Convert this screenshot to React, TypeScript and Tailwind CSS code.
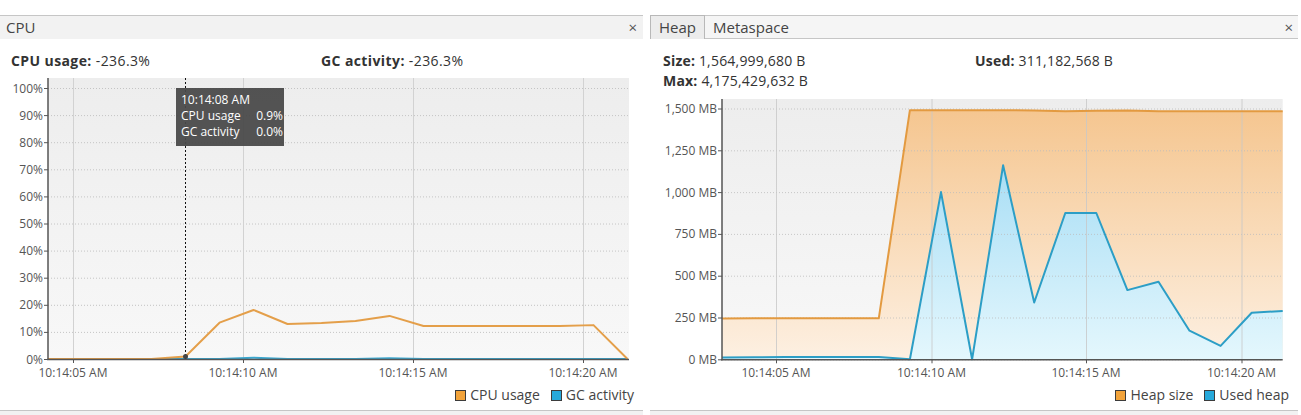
import React from "react";

const FONT = { fontFamily: '"Open Sans", "Noto Sans", "Liberation Sans", sans-serif' };

// CPU chart (left). svg origin: global (0, 71)
const CPU_OY = 71;
const cpuY = (v: number) => 359 - v * 2.71 - CPU_OY;
const cpuX = (n: number) => 83.5 + 34 * n;
const cpuVals = [0, 0, 0, 0.9, 13.4, 18.1, 12.9, 13.3, 14, 15.9, 12.2, 12.2, 12.2, 12.2, 12.2, 12.5, 0];
const gcVals = [0, 0, 0, 0, 0, 0.5, 0, 0, 0, 0.3, 0, 0, 0, 0, 0, 0, 0];

function cpuPath(vals: number[]) {
  const pts: string[] = [`48,${cpuY(0)}`];
  vals.forEach((v, i) => {
    const x = Math.min(cpuX(i), 628.5);
    pts.push(`${x},${cpuY(v)}`);
  });
  return "M" + pts.join(" L");
}

// Heap chart (right). svg origin global (650, 91)
const H_OX = 650;
const H_OY = 91;
const hX = (n: number) => 776 + 31.07 * (n + 0.31) - H_OX;
const hY = (mb: number) => 359.3 - mb * 0.1672 - H_OY;
// n from -1 .. 16
const heapVals = [245, 245, 245, 245, 245, 1490, 1490, 1490, 1490, 1488, 1484, 1486, 1488, 1484, 1484, 1484, 1484, 1484];
const usedVals = [12, 14, 14, 14, 14, 0, 1000, 0, 1160, 340, 875, 875, 414, 464, 171, 80, 279, 289];

function heapPts(vals: number[]) {
  const pts: [number, number][] = [[722 - H_OX, hY(vals[0] - 1)]];
  vals.forEach((v, i) => {
    const x = hX(i - 1);
    if (x >= 722 - H_OX) pts.push([Math.min(x, 1282.7 - H_OX), hY(v)]);
  });
  return pts;
}

function toLine(pts: [number, number][]) {
  return "M" + pts.map((p) => `${p[0].toFixed(1)},${p[1].toFixed(1)}`).join(" L");
}
function toArea(pts: [number, number][], base: number) {
  const first = pts[0];
  const last = pts[pts.length - 1];
  return toLine(pts) + ` L${last[0].toFixed(1)},${base} L${first[0].toFixed(1)},${base} Z`;
}

function CloseX() {
  return <span className="text-[15px] leading-none text-[#555]">×</span>;
}

function LegendItem({ color, label }: { color: string; label: string }) {
  return (
    <div className="flex items-center gap-[4px]">
      <span className="inline-block w-[11px] h-[11px] border border-[#3c3c3c]" style={{ background: color }} />
      <span className="text-[14px] text-[#444] leading-[18px]">{label}</span>
    </div>
  );
}

function CpuChart() {
  const yTicks = [0, 10, 20, 30, 40, 50, 60, 70, 80, 90, 100];
  const xTicks = [
    { x: 73, l: "10:14:05 AM" },
    { x: 243, l: "10:14:10 AM" },
    { x: 413, l: "10:14:15 AM" },
    { x: 583, l: "10:14:20 AM" },
  ];
  return (
    <svg width={643} height={314} className="block" style={FONT}>
      <defs>
        <linearGradient id="bgL" x1="0" y1="0" x2="0" y2="1">
          <stop offset="0" stopColor="#ededed" />
          <stop offset="1" stopColor="#f8f8f8" />
        </linearGradient>
      </defs>
      <rect x={48} y={7} width={581} height={281} fill="url(#bgL)" />
      {yTicks.map((t) => (
        <line key={t} x1={48} x2={629} y1={cpuY(t) + 0.5} y2={cpuY(t) + 0.5} stroke="#c4c4c4" strokeDasharray="1 2" />
      ))}
      {xTicks.map((t) => (
        <line key={t.x} x1={t.x + 0.5} x2={t.x + 0.5} y1={7} y2={288} stroke="#d2d2d2" />
      ))}
      <path d={cpuPath(gcVals)} fill="none" stroke="#3aa7cf" strokeWidth={2} strokeLinejoin="round" />
      <path d={cpuPath(cpuVals)} fill="none" stroke="#e49f4a" strokeWidth={2} strokeLinejoin="round" />
      {/* axes */}
      <line x1={48} x2={48} y1={7} y2={289} stroke="#555" strokeWidth={1.5} />
      <line x1={47} x2={629} y1={288.5} y2={288.5} stroke="#555" strokeWidth={1.5} />
      {yTicks.map((t) => (
        <g key={"l" + t}>
          <line x1={44} x2={48} y1={cpuY(t) + 0.5} y2={cpuY(t) + 0.5} stroke="#555" />
          <text x={43} y={cpuY(t) + 4.5} textAnchor="end" fontSize={12} fill="#555">
            {t}%
          </text>
        </g>
      ))}
      {xTicks.map((t) => (
        <g key={"x" + t.x}>
          <line x1={t.x + 0.5} x2={t.x + 0.5} y1={288} y2={292} stroke="#555" />
          <text x={t.x} y={306} textAnchor="middle" fontSize={12} fill="#555">
            {t.l}
          </text>
        </g>
      ))}
      {/* cursor */}
      <line x1={185.5} x2={185.5} y1={7} y2={288} stroke="#111" strokeDasharray="2 2" />
      <circle cx={185.5} cy={cpuY(0.9)} r={2.5} fill="#444" />
    </svg>
  );
}

function HeapChart() {
  const yTicks = [
    { v: 0, l: "0 MB" },
    { v: 250, l: "250 MB" },
    { v: 500, l: "500 MB" },
    { v: 750, l: "750 MB" },
    { v: 1000, l: "1,000 MB" },
    { v: 1250, l: "1,250 MB" },
    { v: 1500, l: "1,500 MB" },
  ];
  const xTicks = [
    { x: 776 - H_OX, l: "10:14:05 AM" },
    { x: 931.5 - H_OX, l: "10:14:10 AM" },
    { x: 1086 - H_OX, l: "10:14:15 AM" },
    { x: 1241.5 - H_OX, l: "10:14:20 AM" },
  ];
  const L = 722 - H_OX;
  const R = 1282.7 - H_OX;
  const base = hY(0);
  const heap = heapPts(heapVals);
  const used = heapPts(usedVals);
  return (
    <svg width={647} height={294} className="block" style={FONT}>
      <defs>
        <linearGradient id="bgR" x1="0" y1="0" x2="0" y2="1">
          <stop offset="0" stopColor="#ededed" />
          <stop offset="1" stopColor="#f8f8f8" />
        </linearGradient>
        <linearGradient id="heapG" x1="0" y1="0" x2="0" y2="1">
          <stop offset="0" stopColor="#f5c690" />
          <stop offset="1" stopColor="#fdf0e2" />
        </linearGradient>
        <linearGradient id="usedG" x1="0" y1="0" x2="0" y2="1">
          <stop offset="0" stopColor="#a9def5" />
          <stop offset="1" stopColor="#e4f7fd" />
        </linearGradient>
      </defs>
      <rect x={L} y={8} width={R - L} height={base - 8} fill="url(#bgR)" />
      <path d={toArea(heap, base)} fill="url(#heapG)" />
      <path d={toArea(used, base)} fill="url(#usedG)" />
      {yTicks.map((t) => (
        <line key={t.v} x1={L} x2={R} y1={hY(t.v) + 0.5} y2={hY(t.v) + 0.5} stroke="#bdbdbd" strokeDasharray="1 2" opacity={0.8} />
      ))}
      {xTicks.map((t) => (
        <line key={t.x} x1={t.x + 0.5} x2={t.x + 0.5} y1={8} y2={base} stroke="#c8c8c8" opacity={0.8} />
      ))}
      <path d={toLine(heap)} fill="none" stroke="#e39a40" strokeWidth={2} strokeLinejoin="round" />
      <path d={toLine(used)} fill="none" stroke="#2c9ec6" strokeWidth={2} strokeLinejoin="round" />
      <line x1={L} x2={L} y1={8} y2={base + 1} stroke="#555" strokeWidth={1.5} />
      <line x1={L - 1} x2={R} y1={base + 0.5} y2={base + 0.5} stroke="#555" strokeWidth={1.5} />
      {yTicks.map((t) => (
        <g key={"l" + t.v}>
          <line x1={L - 4} x2={L} y1={hY(t.v) + 0.5} y2={hY(t.v) + 0.5} stroke="#555" />
          <text x={L - 5} y={hY(t.v) + 4.5} textAnchor="end" fontSize={12} fill="#555">
            {t.l}
          </text>
        </g>
      ))}
      {xTicks.map((t) => (
        <g key={"x" + t.x}>
          <line x1={t.x + 0.5} x2={t.x + 0.5} y1={base} y2={base + 4} stroke="#555" />
          <text x={t.x} y={286} textAnchor="middle" fontSize={12} fill="#555">
            {t.l}
          </text>
        </g>
      ))}
    </svg>
  );
}

export default function App() {
  return (
    <div className="w-[1301px] h-[415px] bg-white overflow-hidden pt-[15px] flex gap-[7px]" style={FONT}>
      {/* Left panel */}
      <div className="w-[643px] flex flex-col">
        <div className="h-[24px] border-t border-[#c6c6c6] bg-[#f2f2f2] flex items-center justify-between pl-[6px] pr-[6px]">
          <span className="text-[15px] text-[#444]">CPU</span>
          <CloseX />
        </div>
        <div className="relative">
          <div className="h-[32px] pt-[12px] pl-[11px] flex text-[14px] tracking-[0.4px] leading-[20px] text-[#333]">
            <div className="w-[310px]">
              <span className="font-bold">CPU usage:</span> -236.3%
            </div>
            <div>
              <span className="font-bold">GC activity:</span> -236.3%
            </div>
          </div>
          <CpuChart />
          <div className="absolute left-[176px] top-[49px] w-[108px] h-[58px] bg-[#4a4a4a]/95 text-white text-[12px] leading-[16px] pl-[5px] pt-[4px]">
            <div>10:14:08 AM</div>
            <div className="flex justify-between pr-[1px]">
              <span>CPU usage</span>
              <span>0.9%</span>
            </div>
            <div className="flex justify-between pr-[1px]">
              <span>GC activity</span>
              <span>0.0%</span>
            </div>
          </div>
        </div>
        <div className="h-[20px] flex justify-end items-center gap-[11px] pr-[9px]">
          <LegendItem color="#f2a33a" label="CPU usage" />
          <LegendItem color="#27a9db" label="GC activity" />
        </div>
        <div className="mt-[5px] flex-1 border-t border-[#c6c6c6] bg-[#f2f2f2]" />
      </div>
      {/* Right panel */}
      <div className="w-[648px] flex flex-col">
        <div className="h-[24px] flex">
          <div className="h-[24px] border border-b-0 border-[#b8b8b8] bg-[#ececec] px-[8px] flex items-center text-[15px] text-[#444]">
            Heap
          </div>
          <div className="flex-1 h-[24px] border-t border-b border-[#c6c6c6] bg-[#f5f5f5] flex items-center justify-between pl-[8px] pr-[5px]">
            <span className="text-[15px] text-[#444]">Metaspace</span>
            <CloseX />
          </div>
        </div>
        <div className="pt-[12px] pl-[13px] text-[14px] tracking-[0.2px] leading-[20px] text-[#333]">
          <div className="flex">
            <div className="w-[312px]">
              <span className="font-bold">Size:</span> 1,564,999,680 B
            </div>
            <div>
              <span className="font-bold">Used:</span> 311,182,568 B
            </div>
          </div>
          <div>
            <span className="font-bold">Max:</span> 4,175,429,632 B
          </div>
        </div>
        <HeapChart />
        <div className="h-[20px] flex justify-end items-center gap-[11px] pr-[9px]">
          <LegendItem color="#f2a33a" label="Heap size" />
          <LegendItem color="#27a9db" label="Used heap" />
        </div>
        <div className="mt-[5px] flex-1 border-t border-[#c6c6c6] bg-[#f2f2f2]" />
      </div>
    </div>
  );
}
